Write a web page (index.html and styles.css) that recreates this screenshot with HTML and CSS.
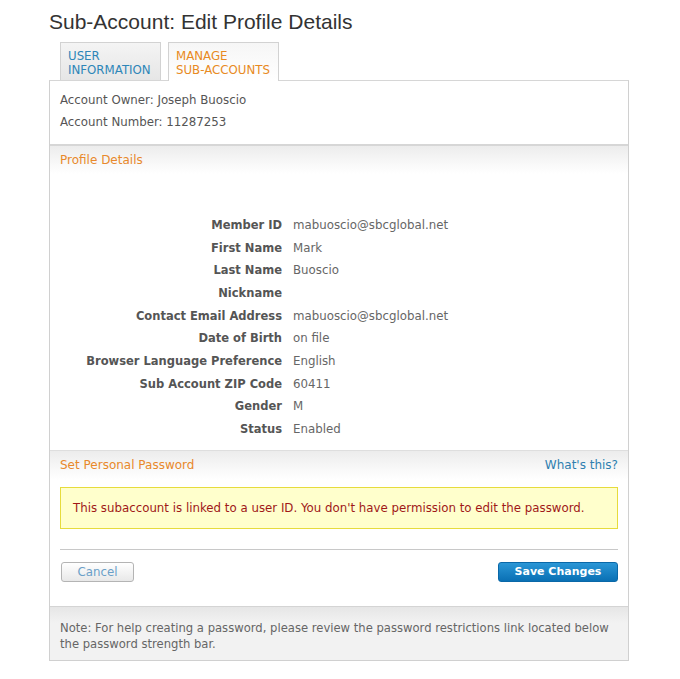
FILE: index.html
```html
<!DOCTYPE html>
<html>
<head>
<meta charset="utf-8">
<link rel="stylesheet" href="styles.css">
</head>
<body>
<div class="page">
  <h1 class="title">Sub-Account: Edit Profile Details</h1>
  <div class="tabs">
    <div class="tab tab-user">USER<br>INFORMATION</div>
    <div class="tab tab-manage">MANAGE<br>SUB-ACCOUNTS</div>
  </div>
  <div class="panel">
    <div class="account">
      <div>Account Owner: Joseph Buoscio</div>
      <div>Account Number: 11287253</div>
    </div>
    <div class="section-head"><span class="section-title">Profile Details</span></div>
    <div class="details">
      <div class="label">Member ID</div><div class="value">mabuoscio@sbcglobal.net</div>
      <div class="label">First Name</div><div class="value">Mark</div>
      <div class="label">Last Name</div><div class="value">Buoscio</div>
      <div class="label">Nickname</div><div class="value"></div>
      <div class="label">Contact Email Address</div><div class="value">mabuoscio@sbcglobal.net</div>
      <div class="label">Date of Birth</div><div class="value">on file</div>
      <div class="label">Browser Language Preference</div><div class="value">English</div>
      <div class="label">Sub Account ZIP Code</div><div class="value">60411</div>
      <div class="label">Gender</div><div class="value">M</div>
      <div class="label">Status</div><div class="value">Enabled</div>
    </div>
    <div class="section-head pw-head">
      <span class="section-title">Set Personal Password</span>
      <a class="whats" href="#">What's this?</a>
    </div>
    <div class="pw-body">
      <div class="alert">This subaccount is linked to a user ID. You don't have permission to edit the password.</div>
      <div class="rule"></div>
      <div class="actions">
        <button class="btn btn-cancel">Cancel</button>
        <button class="btn btn-save">Save Changes</button>
      </div>
    </div>
    <div class="note">Note: For help creating a password, please review the password restrictions link located below the password strength bar.</div>
  </div>
</div>
</body>
</html>
```
FILE: styles.css
```css
html, body {
  margin: 0;
  padding: 0;
  background: #fff;
}
.page {
  width: 580px;
  margin-left: 49px;
  font-family: "DejaVu Sans", Verdana, sans-serif;
  font-size: 11.8px;
  color: #555;
}
.title {
  font-family: "Liberation Sans", Arial, sans-serif;
  font-weight: normal;
  font-size: 21px;
  color: #333;
  margin: 0;
  padding-top: 10px;
  line-height: 24px;
  height: 32px;
}
.tabs {
  display: flex;
  gap: 7px;
  padding-left: 11px;
  height: 38px;
  position: relative;
  z-index: 1;
}
.tab {
  box-sizing: border-box;
  height: 39px;
  border: 1px solid #d2d2d2;
  border-bottom: none;
  padding: 6px 0 0 7px;
  line-height: 14px;
  font-size: 11.8px;
}
.tab-user {
  width: 101px;
  color: #2e86b8;
  background: linear-gradient(#f4f4f4, #e6e6e6);
  height: 38px;
}
.tab-manage {
  width: 111px;
  color: #e88a22;
  background: linear-gradient(#f6f6f6, #ffffff);
}
.panel {
  border: 1px solid #d0d0d0;
  border-top-color: #d6d6d6;
}
.account {
  padding: 9px 10px 11px;
  line-height: 21.5px;
  border-bottom: 2px solid #d6d6d6;
}
.section-head {
  display: flex;
  justify-content: space-between;
  align-items: center;
  height: 28px;
  padding: 0 10px;
  background: linear-gradient(#ececec, #fafafa 70%, #ffffff);
}
.section-title {
  color: #e8892b;
  font-size: 12px;
}
.details {
  display: grid;
  grid-template-columns: 232px 1fr;
  column-gap: 11px;
  line-height: 22.67px;
  padding: 40px 0 9px;
}
.label {
  text-align: right;
  font-weight: bold;
  font-size: 11.5px;
  color: #555;
}
.value {
  color: #666;
}
.pw-head {
  border-top: 1px solid #dedede;
  height: 29px;
}
.whats {
  color: #2e7fb0;
  text-decoration: none;
  font-size: 12px;
}
.pw-body {
  padding: 7px 10px 24px;
}
.alert {
  background: #ffffcc;
  border: 1px solid #e6dc3c;
  color: #a01818;
  height: 40px;
  line-height: 40px;
  padding: 0 12px;
}
.rule {
  height: 1px;
  background: #c8c8c8;
  margin-top: 20px;
}
.actions {
  display: flex;
  justify-content: space-between;
  margin-top: 12px;
}
.btn {
  font-family: "DejaVu Sans", Verdana, sans-serif;
  font-size: 11.8px;
  height: 20px;
  padding: 0;
  border-radius: 3px;
  line-height: 18px;
}
.btn-cancel {
  width: 73px;
  margin-left: 1px;
  color: #6a9fc8;
  background: linear-gradient(#ffffff, #e8e8e8);
  border: 1px solid #b4b4b4;
}
.btn-save {
  width: 120px;
  color: #fff;
  font-weight: bold;
  font-size: 11px;
  background: linear-gradient(#2a96d6, #0a70b4);
  border: 1px solid #0a68a8;
}
.note {
  background: linear-gradient(#e6e6e6, #f2f2f2 30%, #f2f2f2);
  border-top: 1px solid #d4d4d4;
  padding: 13px 10px 8px;
  line-height: 16px;
  font-size: 11.6px;
  color: #666;
}
```
